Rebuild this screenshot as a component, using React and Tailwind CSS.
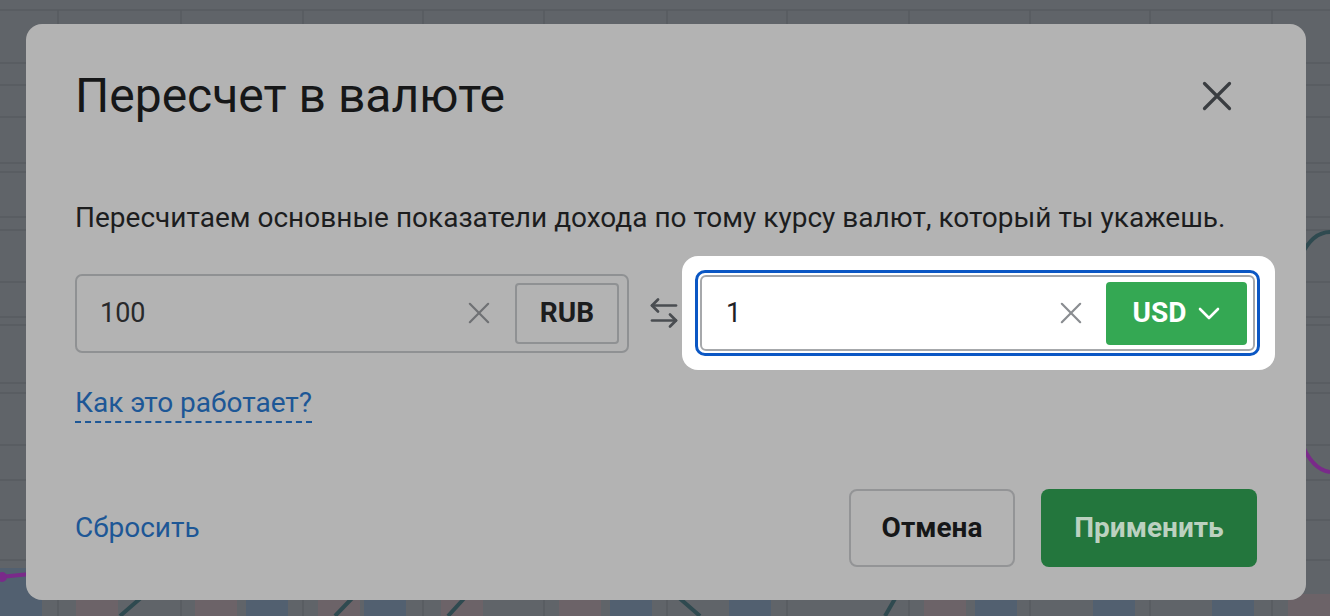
import { ArrowLeftRight } from "lucide-react";

const font = { fontFamily: "Roboto, 'Noto Sans', sans-serif" };

function Cross({ className, size = 24, stroke = 2.5 }) {
  return (
    <svg className={className} width={size} height={size} viewBox="0 0 24 24" fill="none" stroke="currentColor" strokeWidth={stroke} strokeLinecap="round">
      <path d="M2 2l20 20M22 2L2 22" />
    </svg>
  );
}

function Backdrop() {
  const cols = [58, 181, 303, 423, 544, 667, 787, 909, 1030, 1150, 1272];
  const rows = [10, 63, 85, 117, 163, 172, 217, 230, 282, 317, 325, 383, 393, 445, 480, 520, 560];
  const blue = [0, 246, 364, 610, 729, 975, 1093, 1212];
  const pink = [76, 195, 318, 441, 559, 924, 1288];
  return (
    <svg className="absolute inset-0" width="1330" height="616" viewBox="0 0 1330 616">
      <rect width="1330" height="616" fill="#606469" />
      {rows.map((y) => (
        <line key={"r" + y} x1="0" x2="1330" y1={y} y2={y} stroke="#575b60" strokeWidth="1.5" />
      ))}
      {cols.map((x) => (
        <line key={"c" + x} x1={x} x2={x} y1="10" y2="616" stroke="#575b60" strokeWidth="1.5" />
      ))}
      {blue.map((x) => (
        <rect key={"b" + x} x={x} y="568" width="42" height="48" fill="#526070" />
      ))}
      {pink.map((x) => (
        <rect key={"p" + x} x={x} y="594" width="42" height="22" fill="#6c6368" />
      ))}
      <path d="M0 577 L30 574" stroke="#7a2a8a" strokeWidth="4" />
      <circle cx="2" cy="577" r="5" fill="#7a2a8a" />
      <path d="M1300 440 Q1312 470 1330 472" stroke="#7a2a8a" strokeWidth="4" fill="none" />
      <path d="M1300 258 Q1312 232 1330 232" stroke="#2f4a50" strokeWidth="4" fill="none" />
      <path d="M120 616 L150 590 M335 616 L360 590 M448 616 L470 592 M700 616 L670 590 M885 616 L900 590" stroke="#2f4a50" strokeWidth="4" />
    </svg>
  );
}

export default function App() {
  return (
    <div className="relative w-[1330px] h-[616px] overflow-hidden" style={font}>
      <Backdrop />
      <div className="absolute left-[26px] top-[24px] w-[1280px] h-[576px] rounded-[16px] bg-[#b3b3b3] flex flex-col px-[49px] pt-[44px] pb-[33px]">
        {/* Header */}
        <div className="flex items-center justify-between">
          <h2 className="text-[48px] leading-[56px] text-[#161718] font-normal">Пересчет в валюте</h2>
          <button className="text-[#3a3d41] mr-[25px]">
            <Cross size={30} stroke={2.6} />
          </button>
        </div>

        <p className="mt-[76px] text-[28px] leading-[36px] text-[#1c1d1e] whitespace-nowrap">
          Пересчитаем основные показатели дохода по тому курсу валют, который ты укажешь.
        </p>

        {/* Inputs */}
        <div className="mt-[20px] flex items-center">
          <div className="shrink-0 w-[554px] h-[79px] rounded-[7px] border-2 border-[#8f9193] flex items-center pl-[23px] pr-[8px]">
            <span className="flex-1 text-[27px] text-[#28292a]">100</span>
            <Cross className="text-[#6f7174] mr-[25px]" size={22} stroke={2.4} />
            <div className="w-[104px] h-[61px] rounded-[4px] border-2 border-[#8f9193] flex items-center justify-center text-[28px] font-bold text-[#1c1d1e]">
              RUB
            </div>
          </div>
          <ArrowLeftRight className="shrink-0 ml-[17px] text-[#4a4d51]" size={36} strokeWidth={1.8} />
          <div className="shrink-0 bg-white rounded-[16px] pl-[13px] pr-[15px] py-[14px]">
            <div className="w-[565px] h-[86px] rounded-[10px] border-[3px] border-[#0b57c4] p-[2px]">
              <div className="h-full rounded-[6px] border-2 border-[#a6a8ab] flex items-center pl-[24px] pr-[6px]">
                <span className="flex-1 text-[27px] text-[#202124]">1</span>
                <Cross className="text-[#8a8d91] mr-[24px]" size={22} stroke={2.4} />
                <div className="w-[141px] h-[63px] rounded-[4px] bg-[#34a853] flex items-center justify-center gap-[12px] text-white text-[28px] font-bold">
                  USD
                  <svg width="22" height="14" viewBox="0 0 22 14" fill="none" stroke="currentColor" strokeWidth="2.6" strokeLinecap="round" strokeLinejoin="round">
                    <path d="M2 3l9 9 9-9" />
                  </svg>
                </div>
              </div>
            </div>
          </div>
        </div>

        <div className="mt-[16px]">
          <a className="text-[28px] leading-[34px] text-[#1d5796] border-b-2 border-dashed border-[#1d5796] pb-[2px]">
            Как это работает?
          </a>
        </div>

        {/* Footer */}
        <div className="mt-auto flex items-center justify-between">
          <a className="text-[28px] text-[#1d5796]">Сбросить</a>
          <div className="flex gap-[26px]">
            <button className="w-[166px] h-[78px] rounded-[8px] border-2 border-[#939496] text-[28px] font-bold text-[#161718]">
              Отмена
            </button>
            <button className="w-[216px] h-[78px] rounded-[8px] bg-[#23763d] text-[28px] font-bold text-[#bcd1c0]">
              Применить
            </button>
          </div>
        </div>
      </div>
    </div>
  );
}
